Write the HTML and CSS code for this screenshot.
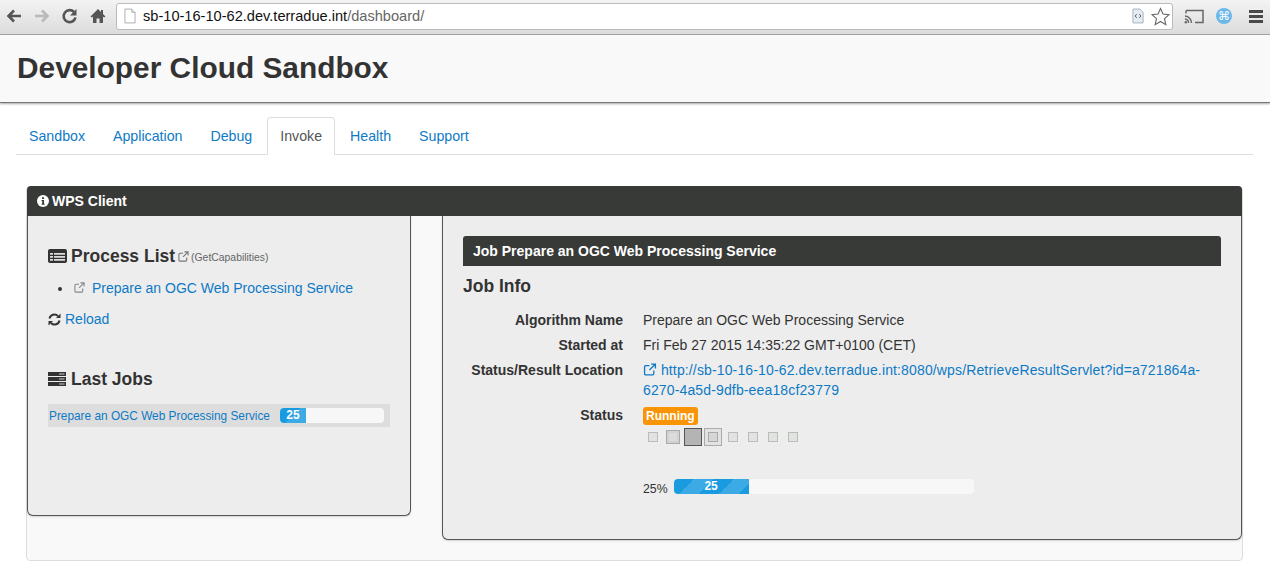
FILE: index.html
```html
<!DOCTYPE html>
<html lang="en">
<head>
<meta charset="utf-8">
<title>Developer Cloud Sandbox</title>
<link rel="stylesheet" href="styles.css">
</head>
<body>
<div class="chrome">
  <svg class="nav-ic" width="18" height="18" viewBox="0 0 18 18"><path d="M16 9H4M9 3.500 3.500 9 9 14.500" fill="none" stroke="#555" stroke-width="2.600"/></svg>
  <svg class="nav-ic" width="18" height="18" viewBox="0 0 18 18"><path d="M2 9h12M9 3.500 14.500 9 9 14.500" fill="none" stroke="#b9b9b9" stroke-width="2.600"/></svg>
  <svg class="nav-ic" width="18" height="18" viewBox="0 0 18 18"><path d="M14.500 10.500A6 6 0 1 1 13 5" fill="none" stroke="#555" stroke-width="2.600"/><path d="M15.500 2v6.500H9z" fill="#555"/></svg>
  <svg class="nav-ic" width="18" height="18" viewBox="0 0 18 18"><path d="M9 2 1.500 9.500 3 10.500 4 9.500V16h3.500v-4.500h3V16H14V9.500l1 1 1.500-1L14 7V3h-2v2z" fill="#555"/></svg>
  <div class="omnibox">
    <svg width="12" height="16" viewBox="0 0 13 16"><path d="M1 .5h7.500L12 4v11.500H1z" fill="#fff" stroke="#aaa"/><path d="M8.500.5V4H12" fill="#eee" stroke="#aaa"/></svg>
    <span class="url"><span class="host">sb-10-16-10-62.dev.terradue.int</span>/dashboard/</span>
    <span class="omni-right">
      <svg width="12" height="16" viewBox="0 0 13 16"><path d="M1 .5h7.500L12 4v11.500H1z" fill="#e4eef2" stroke="#aab"/><path d="M5 6 3.500 8 5 10M8 6l1.500 2L8 10" fill="none" stroke="#555"/></svg>
      <svg width="19" height="19" viewBox="0 0 19 19"><path d="M9.500 1.500 12 7l6 .6-4.500 4 1.300 6-5.300-3.100-5.300 3.100 1.300-6L1 7.600 7 7z" fill="#fff" stroke="#666" stroke-width="1.100"/></svg>
    </span>
  </div>
  <svg class="cast" width="20" height="15" viewBox="0 0 20 15"><path d="M2 1.500h17v12h-8" fill="none" stroke="#666" stroke-width="1.500"/><path d="M2 1.500v3M1 7a7 7 0 0 1 6.500 7M1 10a4 4 0 0 1 3.500 4" fill="none" stroke="#666" stroke-width="1.400"/><circle cx="1.800" cy="13.200" r="1.200" fill="#666"/></svg>
  <span class="ext">⌘</span>
  <span class="burger"><i></i><i></i><i></i></span>
</div>

<header class="brand"><h1>Developer Cloud Sandbox</h1></header>

<nav class="tabs">
  <a href="#">Sandbox</a>
  <a href="#">Application</a>
  <a href="#">Debug</a>
  <a href="#" class="active">Invoke</a>
  <a href="#">Health</a>
  <a href="#">Support</a>
</nav>

<section class="panel">
  <div class="panel-head">
    <svg class="ic" width="12" height="12" viewBox="0 0 12 12"><circle cx="6" cy="6" r="6" fill="#fff"/><path d="M5 2.300h2v1.800H5zM4.500 5h2.500v3.700h.7v1H4.500v-1h.7V6h-.7z" fill="#383a37"/></svg>
    WPS Client
  </div>
  <div class="panel-body">
    <aside class="side">
      <h3 class="side-title">
        <svg width="19" height="14" viewBox="0 0 19 14"><rect width="19" height="14" rx="2" fill="#333"/><path d="M2 4h3v1.700H2zM6 4h11v1.700H6zM2 7h3v1.700H2zM6 7h11v1.700H6zM2 10h3v1.700H2zM6 10h11v1.700H6z" fill="#ddd"/></svg>
        Process List
        <svg class="ext-link" width="11" height="11" viewBox="0 0 12 12"><path d="M9.500 7v3a1 1 0 0 1-1 1H2a1 1 0 0 1-1-1V3.500a1 1 0 0 1 1-1h3.500M7 1h4v4M11 1 5.500 6.500" fill="none" stroke="#777" stroke-width="1.200"/></svg>
        <small>(GetCapabilities)</small>
      </h3>
      <ul class="proc">
        <li>
          <svg class="ext-link" width="11" height="11" viewBox="0 0 12 12"><path d="M9.500 7v3a1 1 0 0 1-1 1H2a1 1 0 0 1-1-1V3.500a1 1 0 0 1 1-1h3.500M7 1h4v4M11 1 5.500 6.500" fill="none" stroke="#888" stroke-width="1.200"/></svg>
          <a href="#">Prepare an OGC Web Processing Service</a>
        </li>
      </ul>
      <p class="reload">
        <svg width="13" height="13" viewBox="0 0 13 13"><path d="M1.500 5.500A5 5 0 0 1 10 3M11.500 7.500A5 5 0 0 1 3 10" fill="none" stroke="#333" stroke-width="2"/><path d="M12.500 .5v4.500H8zM.5 12.500V8H5z" fill="#333"/></svg>
        <a href="#">Reload</a>
      </p>
      <h3 class="side-title jobs">
        <svg width="18" height="14" viewBox="0 0 18 14"><path d="M0 0h18v4H0zM0 5h18v4H0zM0 10h18v4H0z" fill="#333"/><path d="M11 1.500h5.500v1H11zM11 6.500h5.500v1H11zM11 11.500h5.500v1H11z" fill="#ccc"/></svg>
        Last Jobs
      </h3>
      <div class="job-row">
        <a href="#">Prepare an OGC Web Processing Service</a>
        <div class="bar small"><div class="fill">25</div></div>
      </div>
    </aside>
    <main class="job">
      <div class="job-head">Job Prepare an OGC Web Processing Service</div>
      <h3 class="job-title">Job Info</h3>
      <dl class="info">
        <dt>Algorithm Name</dt>
        <dd>Prepare an OGC Web Processing Service</dd>
        <dt>Started at</dt>
        <dd>Fri Feb 27 2015 14:35:22 GMT+0100 (CET)</dd>
        <dt>Status/Result Location</dt>
        <dd class="loc">
          <svg width="14" height="13" viewBox="0 0 12 12"><path d="M9.500 7v3a1 1 0 0 1-1 1H2a1 1 0 0 1-1-1V3.500a1 1 0 0 1 1-1h3.500M7 1h4v4M11 1 5.500 6.500" fill="none" stroke="#0e7ac6" stroke-width="1.200"/></svg>
          <a href="#">http://sb-10-16-10-62.dev.terradue.int:8080/wps/RetrieveResultServlet?id=a721864a-6270-4a5d-9dfb-eea18cf23779</a>
        </dd>
        <dt>Status</dt>
        <dd class="status">
          <span class="badge">Running</span>
          <div class="steps">
            <span class="step"></span>
            <span class="step mid"></span>
            <span class="step cur"></span>
            <span class="step big"></span>
            <span class="step"></span>
            <span class="step"></span>
            <span class="step"></span>
            <span class="step"></span>
          </div>
          <div class="progress">
            <span class="pct">25%</span>
            <div class="bar large"><div class="fill">25</div></div>
          </div>
        </dd>
      </dl>
    </main>
  </div>
</section>
</body>
</html>
```
FILE: styles.css
```css
* { box-sizing: border-box; }
html, body { margin: 0; height: 561px; overflow: hidden; }
body { background: #fff; font-family: "Liberation Sans", Arial, sans-serif; font-size: 14px; color: #333; }
a { color: #0e7ac6; text-decoration: none; }

.chrome { height: 35px; display: flex; align-items: center; padding: 0 0 2px 5px; gap: 10px; background: linear-gradient(#f3f3f3, #dcdcdc); border-bottom: 1px solid #a5a5a5; }
.nav-ic { flex: none; }
.omnibox { width: 1057px; height: 27px; margin-left: -1px; display: flex; align-items: center; gap: 7px; padding: 0 2px 0 7px; background: #fff; border: 1px solid #bbb; border-radius: 3px; font-size: 14.600px; }
.url { color: #666; }
.host { color: #111; }
.omni-right { margin-left: auto; display: flex; align-items: center; gap: 7px; }
.cast { margin-left: 1px; }
.ext { width: 16px; height: 16px; margin-left: 2px; border-radius: 50%; background: #6cb8ea; color: #fff; font-family: "DejaVu Sans", sans-serif; font-size: 12px; line-height: 16px; text-align: center; }
.burger { margin-left: 7px; display: flex; flex-direction: column; gap: 2px; width: 14px; }
.burger i { height: 3px; background: #4a4a4a; }

.brand { height: 68px; padding: 0 17px; display: flex; align-items: center; background: #f9f9f9; border-bottom: 1px solid #777; box-shadow: 0 1px 2px rgba(0,0,0,.35); }
.brand h1 { margin: 0; font-size: 29.850px; font-weight: bold; color: #333; position: relative; top: -1px; }

.tabs { margin: 14px 17px 0 16px; height: 38px; display: flex; border-bottom: 1px solid #ddd; font-size: 14.200px; }
.tabs a { padding: 10px 13px; height: 38px; margin-right: 2px; line-height: 18px; }
.tabs a.active { background: #fff; color: #555; border: 1px solid #ddd; border-bottom-color: #fff; border-radius: 4px 4px 0 0; padding: 9px 12px; }

.panel { margin: 31px 27px 0 26px; height: 375px; background: #f9f9f9; border: 1px solid #ddd; border-radius: 4px; }
.panel-head { height: 30px; margin: -1px 0 0 0; padding: 0 10px; display: flex; align-items: center; gap: 3px; background: #383a37; color: #fff; font-weight: bold; font-size: 14px; border-radius: 4px 4px 0 0; }
.panel-body { display: flex; gap: 31px; align-items: flex-start; }

.side { width: 384px; height: 300px; padding: 0 20px; background: #ededed; border: 1px solid #555; border-top: 0; border-radius: 0 0 6px 6px; box-shadow: 0 1px 2px rgba(0,0,0,.15); }
.side-title { margin: 29px 0 0; height: 22px; display: flex; align-items: center; gap: 4px; font-size: 17.500px; line-height: 22px; color: #333; }
.side-title small { font-size: 10.400px; font-weight: normal; color: #666; margin-left: -2px; position: relative; top: 2px; }
.side-title .ext-link { margin-left: -1px; }
.proc { margin: 10px 0 0; padding: 0 0 0 25px; line-height: 22px; }
.proc .ext-link { margin: 0 3px 0 1px; }
.reload { margin: 10px 0 0; display: flex; align-items: center; gap: 4px; line-height: 20px; }
.side-title.jobs { margin-top: 39px; gap: 5px; }
.job-row { margin-top: 14px; height: 23px; padding-left: 1px; display: flex; align-items: center; gap: 10px; background: #dddddd; font-size: 11.850px; }

.bar { background: #f7f7f7; border-radius: 4px; overflow: hidden; }
.bar .fill { width: 25%; height: 100%; color: #fff; text-align: center; background-color: #1a9be0; background-image: linear-gradient(-45deg, rgba(255,255,255,.15) 25%, transparent 25%, transparent 50%, rgba(255,255,255,.15) 50%, rgba(255,255,255,.15) 75%, transparent 75%); background-size: 40px 40px; }
.bar.small { width: 104px; height: 15px; }
.bar.small .fill { font-weight: bold; font-size: 12px; line-height: 15px; }
.bar.large { width: 300px; height: 15px; }
.bar.large .fill { font-size: 12px; font-weight: bold; line-height: 15px; }

.job { width: 800px; height: 324px; padding: 20px 20px 0; background: #ededed; border: 1px solid #555; border-top: 0; border-radius: 0 0 6px 6px; box-shadow: 0 1px 2px rgba(0,0,0,.15); }
.job-head { height: 30px; padding: 0 10px; line-height: 30px; background: #383a37; color: #fff; font-weight: bold; font-size: 14px; border-radius: 3px 3px 0 0; }
.job-title { margin: 10px 0 0; font-size: 17.500px; line-height: 20px; color: #333; }
.info { margin: 14px 0 0; display: grid; grid-template-columns: 160px 1fr; column-gap: 20px; line-height: 20px; }
.info dt { text-align: right; font-weight: bold; margin: 0; }
.info dd { margin: 0 0 5px; }
.loc a { letter-spacing: .14px; }
.loc svg { vertical-align: -1px; }
.badge { display: inline-block; margin-top: 2px; padding: 0 3px; height: 18px; line-height: 18px; background: #f89406; color: #fff; font-weight: bold; font-size: 12px; border-radius: 3px; vertical-align: top; }
.steps { margin-top: 3px; display: flex; align-items: center; padding-left: 5px; height: 18px; }
.step { width: 10px; height: 10px; margin-right: 10px; background: #e1e3e1; border: 1px solid #bbb; }
.step.mid { width: 14px; height: 14px; margin: 0 4px 0 -2px; background: #dcdcdc; border-color: #aaa; box-shadow: inset 0 0 0 2px #d2d2d2; }
.step.cur { width: 18px; height: 18px; margin-right: 2px; background: #b4b4b4; border-color: #555; }
.step.big { width: 18px; height: 18px; margin-right: 6px; background: #d6d6d6; border-color: #aaa; box-shadow: inset 0 0 0 3px #e2e2e2, inset 0 0 0 4px #aaa; }
.progress { margin-top: 30px; display: flex; align-items: center; gap: 6px; font-size: 12.300px; }
.pct { position: relative; top: 3px; }
```
